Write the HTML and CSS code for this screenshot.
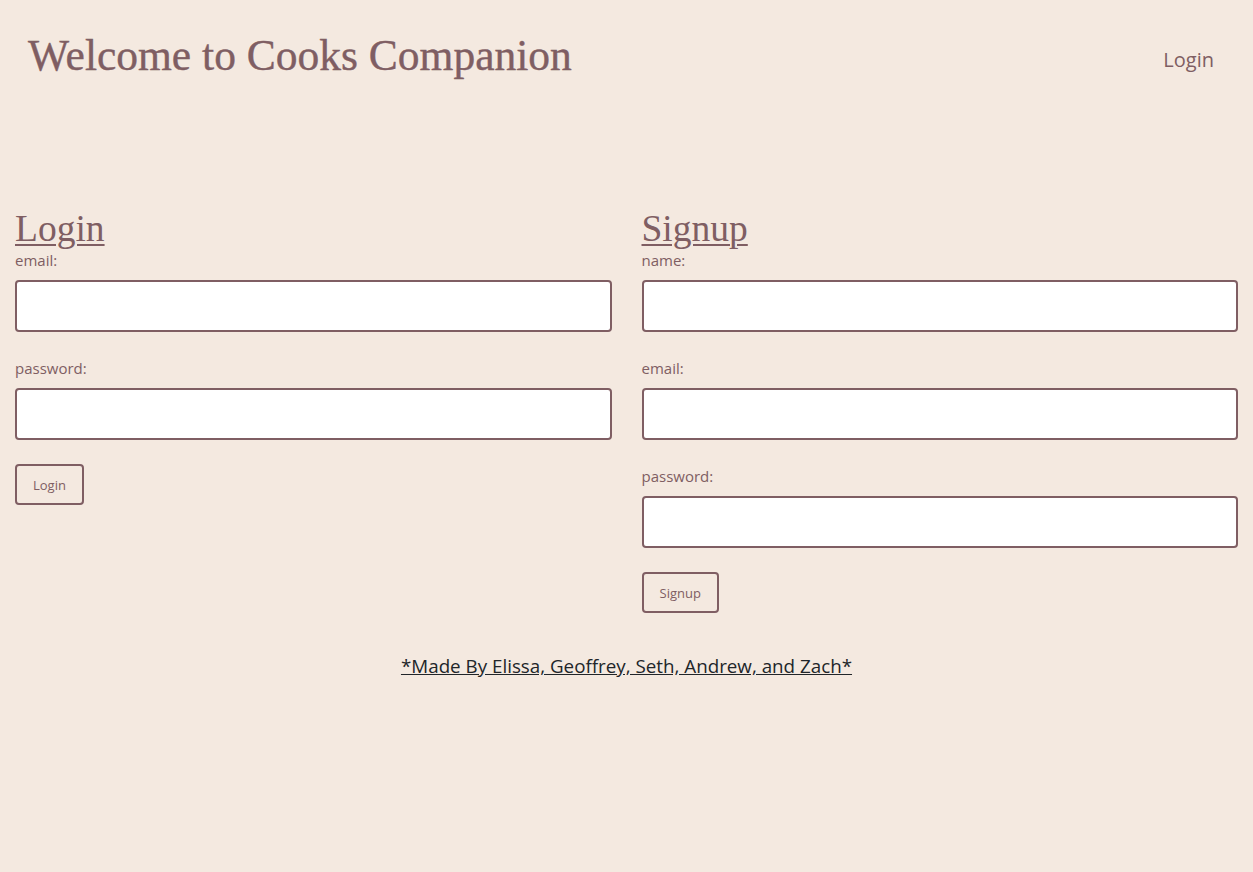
FILE: index.html
```html
<!DOCTYPE html>
<html lang="en">
<head>
<meta charset="utf-8">
<title>Cooks Companion</title>
<link rel="stylesheet" href="styles.css">
</head>
<body>
<header class="topbar">
  <h1 class="brand">Welcome to Cooks Companion</h1>
  <nav class="nav"><a class="nav-link" href="#">Login</a></nav>
</header>
<main class="forms">
  <section class="col">
    <h2 class="form-title">Login</h2>
    <form class="form">
      <label class="label">email:</label>
      <input class="input" type="email">
      <label class="label">password:</label>
      <input class="input" type="password">
      <button class="btn" type="button">Login</button>
    </form>
  </section>
  <section class="col">
    <h2 class="form-title">Signup</h2>
    <form class="form">
      <label class="label">name:</label>
      <input class="input" type="text">
      <label class="label">email:</label>
      <input class="input" type="email">
      <label class="label">password:</label>
      <input class="input" type="password">
      <button class="btn" type="button">Signup</button>
    </form>
  </section>
</main>
<footer class="footer">
  <a class="credits" href="#">*Made By Elissa, Geoffrey, Seth, Andrew, and Zach*</a>
</footer>
</body>
</html>
```

FILE: styles.css
```css
html, body {
  margin: 0;
  padding: 0;
}
body {
  background: #f4e9e0;
  color: #7f5e63;
  font-family: "Open Sans", "Noto Sans", sans-serif;
  min-height: 872px;
}
.topbar {
  display: flex;
  align-items: center;
  justify-content: space-between;
  padding: 28px 39px 0 28px;
  height: 54px;
}
.brand {
  margin: 0;
  font-family: "Liberation Serif", serif;
  font-weight: normal;
  font-size: 43.5px;
  color: #7f5e63;
  line-height: 54px;
  -webkit-text-stroke: 0.4px #7f5e63;
}
.nav-link {
  color: #7f5e63;
  text-decoration: none;
  font-size: 20px;
  position: relative;
  top: 4px;
}
.forms {
  display: grid;
  grid-template-columns: 1fr 1fr;
  column-gap: 30px;
  padding: 127px 15px 0 15px;
}
.form-title {
  margin: 0;
  font-family: "Liberation Serif", serif;
  font-weight: normal;
  font-size: 37.5px;
  line-height: 40px;
  text-decoration: underline;
  text-decoration-thickness: 2px;
  text-underline-offset: 3px;
  color: #7f5e63;
}
.form {
  display: flex;
  flex-direction: column;
  align-items: flex-start;
}
.label {
  font-size: 15px;
  line-height: 22px;
  margin-bottom: 9px;
}
.input {
  box-sizing: border-box;
  width: 100%;
  height: 52px;
  border: 2px solid #7f5e63;
  border-radius: 4px;
  background: #fff;
  margin: 0 0 25px 0;
}
.btn {
  margin-top: -1px;
  box-sizing: border-box;
  height: 41px;
  padding: 0 16px;
  border: 2px solid #7f5e63;
  border-radius: 4px;
  background: transparent;
  color: #7f5e63;
  font-family: "Open Sans", "Noto Sans", sans-serif;
  font-size: 13px;
}
.footer {
  text-align: center;
  padding-top: 41px;
}
.credits {
  color: #212529;
  font-size: 18.8px;
  line-height: 24px;
}
```
